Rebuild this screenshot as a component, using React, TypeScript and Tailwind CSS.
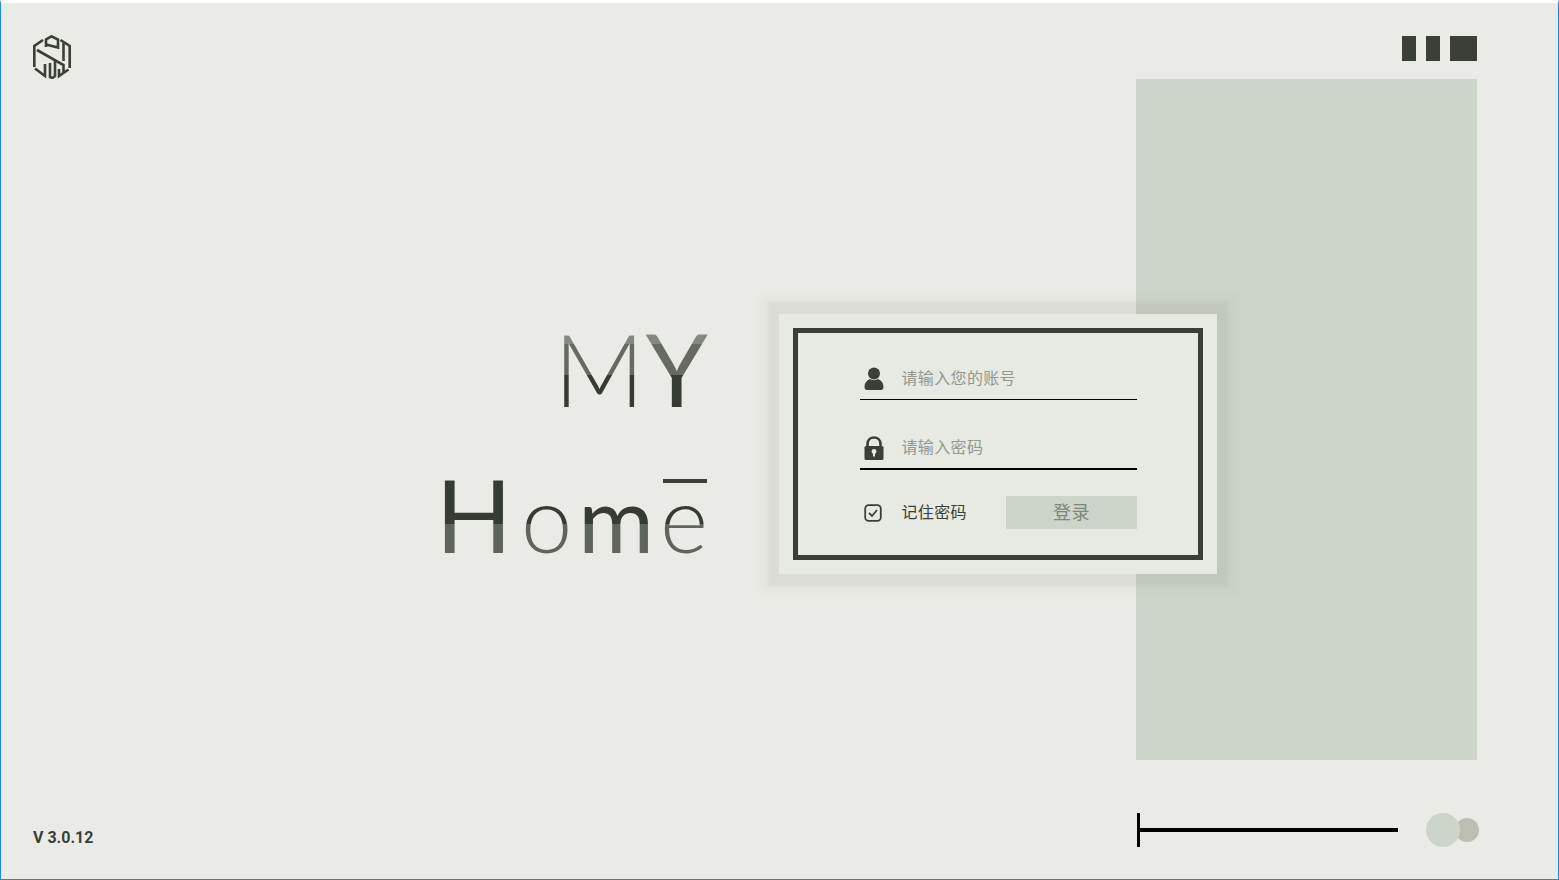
const FONT = { fontFamily: '"Roboto", "Noto Sans CJK SC", sans-serif' };

function Logo() {
  return (
    <svg width="38" height="44" viewBox="0 0 38 44" fill="none" stroke="#3a3f38" strokeWidth="2.6">
      <path d="M10 5 L1.3 11 V32" />
      <path d="M2 33.5 L12 41 V29" />
      <path d="M27.5 5 L36.7 11 V33" />
      <path d="M35.5 34.5 L26 41 V34" />
      <path d="M17 28 V42 L19.5 43 L22 41 V25" />
      <path d="M13 12 V4.5 L18.5 1.3 L25 4.5 V12.5 L13 9.5" />
      <path d="M4 15 L30.5 30 V37" />
      <path d="M30.5 8 V26" />
    </svg>
  );
}

function UserIcon() {
  return (
    <svg width="20" height="24" viewBox="0 0 20 24" fill="#3a3f38">
      <circle cx="10" cy="6.5" r="6" />
      <path d="M0.5 20 C0.5 15.5 3.5 13 6 12 C8 13.5 12 13.5 14 12 C16.5 13 19.5 15.5 19.5 20 C19.5 22 18.5 23 17 23 H3 C1.5 23 0.5 22 0.5 20 Z" />
    </svg>
  );
}

function LockIcon() {
  return (
    <svg width="20" height="24" viewBox="0 0 20 24" fill="none">
      <path d="M3.5 10 V8 C3.5 4 6.5 1.5 10 1.5 C13.5 1.5 16.5 4 16.5 8 V10" stroke="#3a3f38" strokeWidth="2.6" />
      <rect x="0.5" y="10" width="19" height="14" rx="1.5" fill="#3a3f38" />
      <circle cx="10" cy="15.5" r="2.4" fill="#e6eae3" />
      <rect x="9" y="16" width="2" height="4.5" fill="#e6eae3" />
    </svg>
  );
}

function CheckIcon() {
  return (
    <svg width="18" height="18" viewBox="0 0 18 18" fill="none" stroke="#3a3f38" strokeWidth="1.8">
      <rect x="1.2" y="1.2" width="15.6" height="15.6" rx="3.5" />
      <path d="M5 9 L8 12 L13 6" />
    </svg>
  );
}

export default function App() {
  return (
    <div
      className="flex h-screen w-full flex-col border-x border-b border-t-[3px] border-x-[#1e88e5] border-b-[#1e88e5] border-t-white bg-[#eaebe6]"
      style={FONT}
    >
      <header className="flex h-[76px] items-start justify-between pr-[81px] pl-[32px]">
        <div className="pt-[32px]">
          <Logo />
        </div>
        <div className="flex gap-[10px] pt-[33px]">
          <div className="h-[25px] w-[14px] bg-[#3a3f38]" />
          <div className="h-[25px] w-[14px] bg-[#3a3f38]" />
          <div className="h-[25px] w-[27px] bg-[#3a3f38]" />
        </div>
      </header>

      <main className="flex h-[681px] items-start justify-end pr-[81px]">
        <div
          className="mt-[229px] mr-[71px] flex flex-col items-end text-right"
          style={{ fontFamily: '"Lato", sans-serif' }}
        >
          <div className="h-[146px] text-[100px] leading-[120px]">
            <span className="bg-[linear-gradient(to_bottom,#848980_0%,#848980_30%,#656a62_30%,#656a62_56%,#363b34_56%,#363b34_100%)] bg-clip-text text-transparent">
              <span className="font-light tracking-[1px]">M</span>
              <span className="font-normal">Y</span>
            </span>
          </div>
          <div className="relative text-[100px] leading-[120px]">
            <span className="bg-[linear-gradient(to_bottom,#363b34_0%,#363b34_58%,#5f645c_58%,#5f645c_100%)] bg-clip-text text-transparent">
              <span className="font-normal tracking-[9px]">H</span>
              <span className="text-[92px] font-light tracking-[6px]">o</span>
              <span className="text-[92px] font-normal tracking-[6px]">m</span>
              <span className="text-[92px] font-light">e</span>
            </span>
            <div className="absolute top-[25px] right-[1px] h-[4px] w-[44px] bg-[#3a3f38]" />
          </div>
        </div>

        <div className="relative z-10 mt-[235px] -mr-[81px] h-[260px] w-[438px] bg-[#e6eae3] p-[14px] shadow-[0_0_4px_11px_rgba(120,110,100,0.08),0_0_8px_19px_rgba(120,110,100,0.045)]">
          <div className="flex h-full flex-col border-[5px] border-[#3a3f38] pt-[28px] pr-[61px] pl-[62px]">
            <div className="flex h-[39px] items-center border-b border-black pb-[3px] pl-[4px]">
              <UserIcon />
              <span className="ml-[17.5px] text-[16px] tracking-[0.35px] text-[#93978f]">请输入您的账号</span>
            </div>
            <div className="mt-[30px] flex h-[40px] items-center border-b-2 border-black pb-[3px] pl-[4px]">
              <LockIcon />
              <span className="ml-[17.5px] text-[16px] tracking-[0.35px] text-[#93978f]">请输入密码</span>
            </div>
            <div className="mt-[26px] flex items-center justify-between pl-[4px]">
              <div className="flex items-center">
                <CheckIcon />
                <span className="ml-[19.5px] text-[16px] tracking-[0.35px] text-[#3a3f38]">记住密码</span>
              </div>
              <button className="h-[33px] w-[131px] bg-[#cdd4c9] text-[18px] tracking-[0.5px] text-[#80857d]">
                登录
              </button>
            </div>
          </div>
        </div>

        <div className="h-[681px] w-[341px] bg-[#cdd4c9]" />
      </main>

      <footer className="flex flex-1 items-start justify-between pr-[79px] pl-[32px]">
        <span className="pt-[66px] text-[16px] font-bold text-[#3a3f38]">V 3.0.12</span>
        <div className="flex items-center pt-[53px]">
          <div className="flex h-[34px] w-[261px] items-center border-l-[3px] border-black">
            <div className="h-[4px] w-full bg-black" />
          </div>
          <div className="ml-[28px] flex items-center">
            <div className="relative z-10 h-[34px] w-[34px] rounded-full bg-[#cdd4c9]" />
            <div className="-ml-[5px] h-[24px] w-[24px] rounded-full bg-[#bdbeb2]" />
          </div>
        </div>
      </footer>
    </div>
  );
}
